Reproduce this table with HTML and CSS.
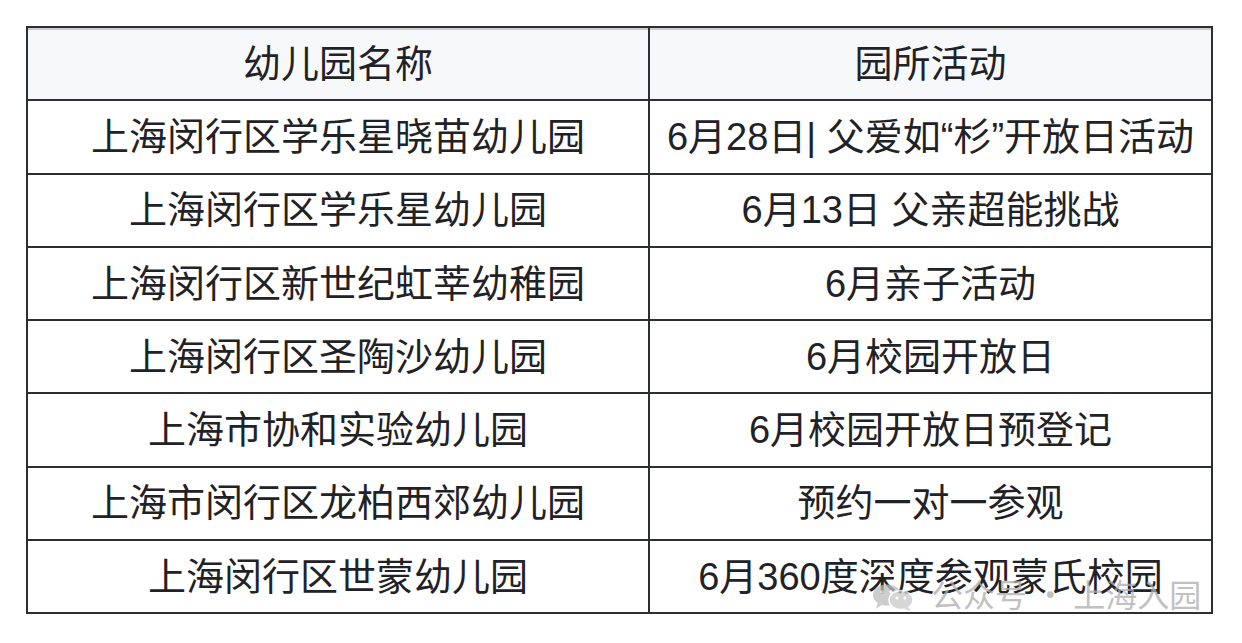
FILE: index.html
```html
<!DOCTYPE html>
<html lang="zh">
<head>
<meta charset="utf-8">
<link rel="stylesheet" href="styles.css">
</head>
<body>
<div class="page">
  <table class="list">
    <thead>
      <tr><th class="c1">幼儿园名称</th><th class="c2">园所活动</th></tr>
    </thead>
    <tbody>
      <tr><td>上海闵行区学乐星晓苗幼儿园</td><td>6月28日| 父爱如“杉”开放日活动</td></tr>
      <tr><td>上海闵行区学乐星幼儿园</td><td>6月13日 父亲超能挑战</td></tr>
      <tr><td>上海闵行区新世纪虹莘幼稚园</td><td>6月亲子活动</td></tr>
      <tr><td>上海闵行区圣陶沙幼儿园</td><td>6月校园开放日</td></tr>
      <tr><td>上海市协和实验幼儿园</td><td>6月校园开放日预登记</td></tr>
      <tr><td>上海市闵行区龙柏西郊幼儿园</td><td>预约一对一参观</td></tr>
      <tr><td>上海闵行区世蒙幼儿园</td><td>6月360度深度参观蒙氏校园</td></tr>
    </tbody>
  </table>
  <div class="mark">
    <svg class="wx" width="48" height="28" viewBox="0 0 48 28">
      <ellipse cx="17" cy="12" rx="14" ry="10.5" fill="#bdbdbd"/>
      <path d="M8 19 L6 26 L13 21 Z" fill="#bdbdbd"/>
      <ellipse cx="31" cy="17" rx="12" ry="9.5" fill="#c9c9c9" stroke="#fff" stroke-width="1.5"/>
      <path d="M38 24 L41 28 L34 26 Z" fill="#c9c9c9"/>
      <circle cx="12" cy="9" r="1.8" fill="#fff"/>
      <circle cx="21" cy="9" r="1.8" fill="#fff"/>
      <circle cx="27" cy="15" r="1.5" fill="#fff"/>
      <circle cx="35" cy="15" r="1.5" fill="#fff"/>
    </svg>
    <span class="mark-text">公众号 · 上海入园</span>
  </div>
</div>
</body>
</html>
```

FILE: styles.css
```css
html, body {
  margin: 0;
  padding: 0;
  background: #ffffff;
}
.page {
  position: relative;
  padding: 26px 0 0 26px;
}
.list {
  border-collapse: collapse;
  width: 1187px;
  table-layout: fixed;
  font-family: "Liberation Sans", "Noto Sans CJK SC", sans-serif;
  font-size: 38px;
  color: #1f2226;
  border: 2px solid #2b2e33;
}
.list th, .list td {
  border: 2px solid #2b2e33;
  height: 71.3px;
  padding: 0;
  text-align: center;
  vertical-align: middle;
  font-weight: normal;
  line-height: 1;
}
.list thead th {
  background: #f7f8fa;
  box-shadow: inset 0 2px 0 #c9ccd1;
}
.c1 { width: 620px; }
.c2 { width: auto; }
.mark {
  position: absolute;
  left: 870px;
  top: 575px;
  display: flex;
  align-items: center;
  gap: 13px;
  opacity: 0.75;
}
.wx { margin-top: 8px; }
.mark-text {
  font-family: "Noto Sans CJK SC", sans-serif;
  font-size: 32px;
  color: #adadad;
  line-height: 1;
}
```
